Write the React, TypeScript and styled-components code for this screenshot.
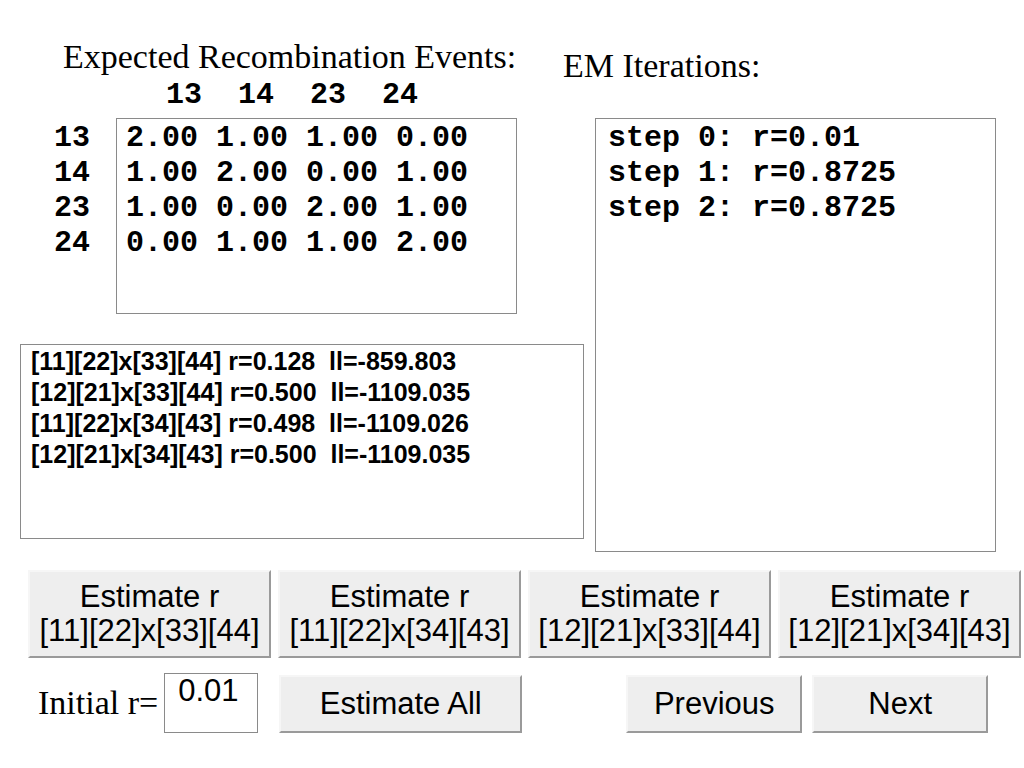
import styled, { createGlobalStyle } from "styled-components";

const GlobalStyle = createGlobalStyle`
  html, body {
    margin: 0;
    padding: 0;
    background: #ffffff;
  }
  body {
    width: 1024px;
    height: 768px;
    overflow: hidden;
    color: #000;
  }
`;

const Page = styled.div`
  width: 1024px;
  height: 768px;
  box-sizing: border-box;
`;

const Top = styled.div`
  display: grid;
  grid-template-columns: 564px 401px;
  grid-template-rows: 118px auto;
  column-gap: 11px;
  margin-left: 20px;
`;

const Heading = styled.div<{ $top: number; $left: number }>`
  font-family: "Liberation Serif", "Times New Roman", serif;
  font-size: 34px;
  line-height: 34px;
  white-space: nowrap;
  padding-top: ${(p) => p.$top}px;
  margin-left: ${(p) => p.$left}px;
`;

const Mono = styled.div`
  font-family: "Liberation Mono", "Courier New", monospace;
  font-weight: bold;
  font-size: 30px;
  line-height: 35px;
  white-space: pre;
`;

const ColHeader = styled(Mono)`
  margin-top: 4px;
  margin-left: 110px;
`;

const LeftCol = styled.div`
  display: flex;
  flex-direction: column;
`;

const MatrixRow = styled.div`
  display: flex;
`;

const RowLabels = styled(Mono)`
  width: 96px;
  flex: none;
  padding-left: 34px;
  padding-top: 3px;
  box-sizing: border-box;
`;

const TextBox = styled.div<{ $w: number; $h: number }>`
  width: ${(p) => p.$w}px;
  height: ${(p) => p.$h}px;
  flex: none;
  box-sizing: border-box;
  border: 1px solid #8a8a8a;
  background: #fff;
`;

const MatrixBox = styled(TextBox)`
  padding: 2px 0 0 9px;
`;

const ResultsBox = styled(TextBox)`
  margin-top: 30px;
  padding: 1px 0 0 10px;
  font-family: "Liberation Sans", Arial, sans-serif;
  font-weight: bold;
  font-size: 25px;
  line-height: 31px;
  white-space: pre;
`;

const IterBox = styled(TextBox)`
  padding: 2px 0 0 12px;
`;

const ButtonRow = styled.div`
  display: flex;
  gap: 7px;
  margin-top: 18px;
  padding-left: 28px;
`;

const Button = styled.button<{ $w: number; $h: number }>`
  width: ${(p) => p.$w}px;
  height: ${(p) => p.$h}px;
  flex: none;
  box-sizing: border-box;
  margin: 0;
  padding: 0;
  background: #eeeeee;
  border: 2px solid;
  border-color: #f6f6f6 #9a9a9a #9a9a9a #f6f6f6;
  border-radius: 0;
  font-family: "Liberation Sans", Arial, sans-serif;
  font-size: 31px;
  line-height: 34px;
  color: #000;
  white-space: nowrap;
  display: flex;
  flex-direction: column;
  align-items: center;
  justify-content: center;
`;

const LowButton = styled(Button)`
  margin-top: 2px;
`;

const BottomRow = styled.div`
  display: flex;
  align-items: center;
  margin-top: 15px;
  padding-left: 38px;
  height: 60px;
`;

const Label = styled.span`
  font-family: "Liberation Serif", "Times New Roman", serif;
  font-size: 34px;
  line-height: 34px;
  white-space: nowrap;
`;

const InitialInput = styled.div`
  width: 94px;
  height: 60px;
  flex: none;
  box-sizing: border-box;
  margin-left: 6px;
  border: 1px solid #8a8a8a;
  padding: 0 0 0 13px;
  font-family: "Liberation Sans", Arial, sans-serif;
  font-size: 31px;
  line-height: 34px;
`;

const Spacer = styled.div<{ $w: number }>`
  width: ${(p) => p.$w}px;
  flex: none;
`;

const matrix = [
  ["13", "2.00 1.00 1.00 0.00"],
  ["14", "1.00 2.00 0.00 1.00"],
  ["23", "1.00 0.00 2.00 1.00"],
  ["24", "0.00 1.00 1.00 2.00"],
];

const results = [
  "[11][22]x[33][44] r=0.128  ll=-859.803",
  "[12][21]x[33][44] r=0.500  ll=-1109.035",
  "[11][22]x[34][43] r=0.498  ll=-1109.026",
  "[12][21]x[34][43] r=0.500  ll=-1109.035",
];

const steps = ["step 0: r=0.01", "step 1: r=0.8725", "step 2: r=0.8725"];

const haplotypes = [
  "[11][22]x[33][44]",
  "[11][22]x[34][43]",
  "[12][21]x[33][44]",
  "[12][21]x[34][43]",
];

export default function App() {
  return (
    <Page>
      <GlobalStyle />
      <Top>
        <div>
          <Heading $top={40} $left={43}>
            Expected Recombination Events:
          </Heading>
          <ColHeader>{"  13  14  23  24"}</ColHeader>
        </div>
        <div>
          <Heading $top={49} $left={-32}>
            EM Iterations:
          </Heading>
        </div>
        <LeftCol>
          <MatrixRow>
            <RowLabels>
              {matrix.map(([label]) => (
                <div key={label}>{label}</div>
              ))}
            </RowLabels>
            <MatrixBox $w={401} $h={196}>
              {matrix.map(([label, row]) => (
                <Mono key={label}>{row}</Mono>
              ))}
            </MatrixBox>
          </MatrixRow>
          <ResultsBox $w={564} $h={195}>
            {results.map((line) => (
              <div key={line}>{line}</div>
            ))}
          </ResultsBox>
        </LeftCol>
        <IterBox $w={401} $h={434}>
          {steps.map((s) => (
            <Mono key={s}>{s}</Mono>
          ))}
        </IterBox>
      </Top>
      <ButtonRow>
        {haplotypes.map((h) => (
          <Button key={h} $w={243} $h={88}>
            <span>Estimate r</span>
            <span>{h}</span>
          </Button>
        ))}
      </ButtonRow>
      <BottomRow>
        <Label>Initial r=</Label>
        <InitialInput>0.01</InitialInput>
        <Spacer $w={21} />
        <LowButton $w={243} $h={58}>
          Estimate All
        </LowButton>
        <Spacer $w={104} />
        <LowButton $w={176} $h={58}>
          Previous
        </LowButton>
        <Spacer $w={10} />
        <LowButton $w={176} $h={58}>
          Next
        </LowButton>
      </BottomRow>
    </Page>
  );
}
